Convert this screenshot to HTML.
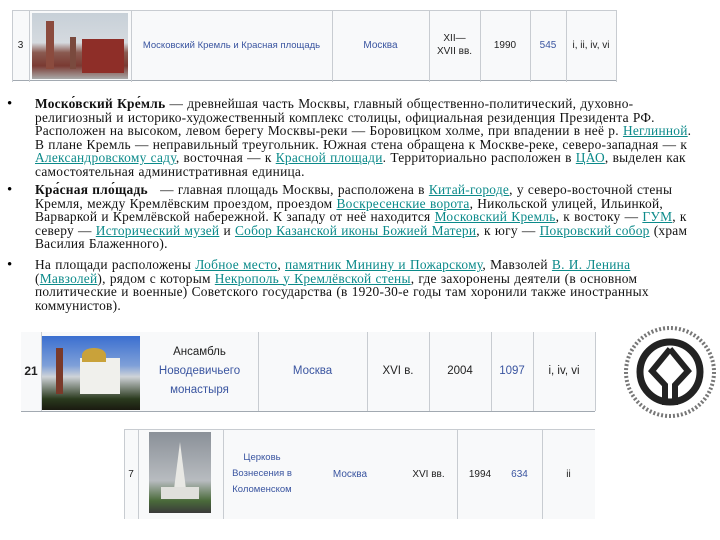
<!DOCTYPE html>
<html><head><meta charset="utf-8"><style>
*{margin:0;padding:0;box-sizing:border-box}
body{width:720px;height:540px;background:#fff;position:relative;overflow:hidden;font-family:"Liberation Sans",sans-serif}
.a{position:absolute}
.t{font-size:10px;color:#3a55a0;text-align:center;display:flex;align-items:center;justify-content:center;line-height:13px}
.vl{position:absolute;width:1px;background:#c8ccd1}
.hl{position:absolute;height:1px;background:#a2a9b1}
.txt{position:absolute;left:35px;width:685px;font-family:"Liberation Serif",serif;font-size:13.4px;letter-spacing:0.25px;word-spacing:0.5px;line-height:13.6px;color:#111;white-space:nowrap}
.txt a{color:#0b8a8a;text-decoration:underline}
.bul{position:absolute;left:7px;font-size:15px;line-height:14px;font-family:"Liberation Serif",serif}
</style></head><body>

<!-- table 1 -->
<div class="a" style="left:12px;top:10px;width:604px;height:70px;background:#f8f9fa"></div>
<div class="hl" style="left:12px;top:10px;width:604px;background:#c8ccd1"></div>
<div class="hl" style="left:12px;top:80px;width:604px"></div>
<div class="vl" style="left:12px;top:10px;height:72px"></div>
<div class="vl" style="left:29px;top:10px;height:72px"></div>
<div class="vl" style="left:131px;top:10px;height:72px"></div>
<div class="vl" style="left:332px;top:10px;height:72px"></div>
<div class="vl" style="left:429px;top:10px;height:72px"></div>
<div class="vl" style="left:480px;top:10px;height:72px"></div>
<div class="vl" style="left:530px;top:10px;height:72px"></div>
<div class="vl" style="left:566px;top:10px;height:72px"></div>
<div class="vl" style="left:616px;top:10px;height:72px"></div>
<div class="a t" style="left:12px;top:10px;width:17px;height:70px;color:#222">3</div>
<div class="a" style="left:32px;top:13px;width:96px;height:66px;background:linear-gradient(#c7d0d8 0,#d5dadf 45%,#8a5a50 60%,#7a3a32 80%,#aaa 100%)">
 <div class="a" style="left:14px;top:8px;width:8px;height:48px;background:#8b4b3e"></div>
 <div class="a" style="left:38px;top:24px;width:6px;height:32px;background:#7a4a3e"></div>
 <div class="a" style="left:50px;top:26px;width:42px;height:34px;background:#8e2e28"></div>
</div>
<div class="a t" style="left:131px;top:10px;width:201px;height:70px;font-size:9.5px">Московский Кремль и Красная площадь</div>
<div class="a t" style="left:332px;top:10px;width:97px;height:70px">Москва</div>
<div class="a t" style="left:429px;top:10px;width:51px;height:70px;color:#222">XII—<br>XVII вв.</div>
<div class="a t" style="left:480px;top:10px;width:50px;height:70px;color:#222">1990</div>
<div class="a t" style="left:530px;top:10px;width:36px;height:70px">545</div>
<div class="a t" style="left:566px;top:10px;width:50px;height:70px;color:#222">i, ii, iv, vi</div>

<!-- text -->
<div class="bul" style="top:97px">•</div>
<div class="bul" style="top:183px">•</div>
<div class="bul" style="top:258px">•</div>
<div class="txt" style="top:97px"><b>Моско́вский Кре́мль</b> — древнейшая часть Москвы, главный общественно-политический, духовно-<br>религиозный и историко-художественный комплекс столицы, официальная резиденция Президента РФ.<br>Расположен на высоком, левом берегу Москвы-реки — Боровицком холме, при впадении в неё р. <a>Неглинной</a>.<br>В плане Кремль — неправильный треугольник. Южная стена обращена к Москве-реке, северо-западная — к<br><a>Александровскому саду</a>, восточная — к <a>Красной площади</a>. Территориально расположен в <a>ЦАО</a>, выделен как<br>самостоятельная административная единица.</div>
<div class="txt" style="top:183px"><b>Кра́сная пло́щадь</b> &nbsp; — главная площадь Москвы, расположена в <a>Китай-городе</a>, у северо-восточной стены<br>Кремля, между Кремлёвским проездом, проездом <a>Воскресенские ворота</a>, Никольской улицей, Ильинкой,<br>Варваркой и Кремлёвской набережной. К западу от неё находится <a>Московский Кремль</a>, к востоку — <a>ГУМ</a>, к<br>северу — <a>Исторический музей</a> и <a>Собор Казанской иконы Божией Матери</a>, к югу — <a>Покровский собор</a> (храм<br>Василия Блаженного).</div>
<div class="txt" style="top:258px">На площади расположены <a>Лобное место</a>, <a>памятник Минину и Пожарскому</a>, Мавзолей <a>В. И. Ленина</a><br>(<a>Мавзолей</a>), рядом с которым <a>Некрополь у Кремлёвской стены</a>, где захоронены деятели (в основном<br>политические и военные) Советского государства (в 1920-30-е годы там хоронили также иностранных<br>коммунистов).</div>

<!-- table 2 -->
<div class="a" style="left:21px;top:332px;width:574px;height:79px;background:#f8f9fa"></div>
<div class="hl" style="left:21px;top:411px;width:574px"></div>
<div class="vl" style="left:41px;top:332px;height:79px"></div>
<div class="vl" style="left:258px;top:332px;height:79px"></div>
<div class="vl" style="left:367px;top:332px;height:79px"></div>
<div class="vl" style="left:429px;top:332px;height:79px"></div>
<div class="vl" style="left:491px;top:332px;height:79px"></div>
<div class="vl" style="left:533px;top:332px;height:79px"></div>
<div class="vl" style="left:595px;top:332px;height:79px"></div>
<div class="a t" style="left:21px;top:332px;width:20px;height:79px;color:#222;font-weight:bold;font-size:12px">21</div>
<div class="a" style="left:42px;top:336px;width:98px;height:74px;background:linear-gradient(#3b6fd0 0,#7fa0d8 40%,#cfd3d8 55%,#2a3a1e 85%,#1a1a10 100%)">
 <div class="a" style="left:38px;top:22px;width:40px;height:36px;background:#f0f0ec"></div>
 <div class="a" style="left:14px;top:12px;width:7px;height:46px;background:#7a3a2a"></div>
 <div class="a" style="left:40px;top:12px;width:24px;height:14px;background:#c9a23a;border-radius:50% 50% 0 0"></div>
</div>
<div class="a t" style="left:141px;top:332px;width:117px;height:79px;font-size:11.5px;line-height:19px"><span><span style="color:#222">Ансамбль</span><br>Новодевичьего<br>монастыря</span></div>
<div class="a t" style="left:258px;top:332px;width:109px;height:79px;font-size:11.5px">Москва</div>
<div class="a t" style="left:367px;top:332px;width:62px;height:79px;font-size:11.5px;color:#222">XVI в.</div>
<div class="a t" style="left:429px;top:332px;width:62px;height:79px;font-size:11.5px;color:#222">2004</div>
<div class="a t" style="left:491px;top:332px;width:42px;height:79px;font-size:11.5px">1097</div>
<div class="a t" style="left:533px;top:332px;width:62px;height:79px;font-size:11.5px;color:#222">i, iv, vi</div>

<!-- table 3 -->
<div class="a" style="left:124px;top:429px;width:471px;height:90px;background:#f8f9fa"></div>
<div class="hl" style="left:124px;top:429px;width:471px;background:#c8ccd1"></div>
<div class="vl" style="left:124px;top:429px;height:90px"></div>
<div class="vl" style="left:138px;top:429px;height:90px"></div>
<div class="vl" style="left:223px;top:429px;height:90px"></div>
<div class="vl" style="left:457px;top:429px;height:90px"></div>
<div class="vl" style="left:542px;top:429px;height:90px"></div>
<div class="a t" style="left:124px;top:429px;width:14px;height:90px;color:#222">7</div>
<div class="a" style="left:149px;top:432px;width:62px;height:81px;background:linear-gradient(#8a9098,#b8bcc0 60%,#4a6a3a 85%,#3a3a3a)">
 <div class="a" style="left:24px;top:10px;width:14px;height:55px;background:#e8e8e4;clip-path:polygon(50% 0,100% 100%,0 100%)"></div>
 <div class="a" style="left:12px;top:55px;width:38px;height:12px;background:#e0e0dc"></div>
</div>
<div class="a t" style="left:223px;top:429px;width:78px;height:90px;font-size:9.5px;line-height:16px">Церковь<br>Вознесения в<br>Коломенском</div>
<div class="a t" style="left:315px;top:429px;width:70px;height:90px">Москва</div>
<div class="a t" style="left:400px;top:429px;width:57px;height:90px;color:#222">XVI вв.</div>
<div class="a t" style="left:460px;top:429px;width:40px;height:90px;color:#222">1994</div>
<div class="a t" style="left:497px;top:429px;width:45px;height:90px">634</div>
<div class="a t" style="left:542px;top:429px;width:53px;height:90px;color:#222">ii</div>

<!-- logo -->
<svg class="a" style="left:620px;top:325px" width="100" height="100" viewBox="0 0 100 100">
 <circle cx="50" cy="47" r="30" fill="none" stroke="#222" stroke-width="7"/>
 <path d="M50 24 L68 46 L55 60 L55 80 M50 24 L32 46 L45 60 L45 80" fill="none" stroke="#222" stroke-width="6"/>
 <circle cx="50" cy="47" r="44" fill="none" stroke="#777" stroke-width="4" stroke-dasharray="2 2"/>
</svg>
</body></html>
